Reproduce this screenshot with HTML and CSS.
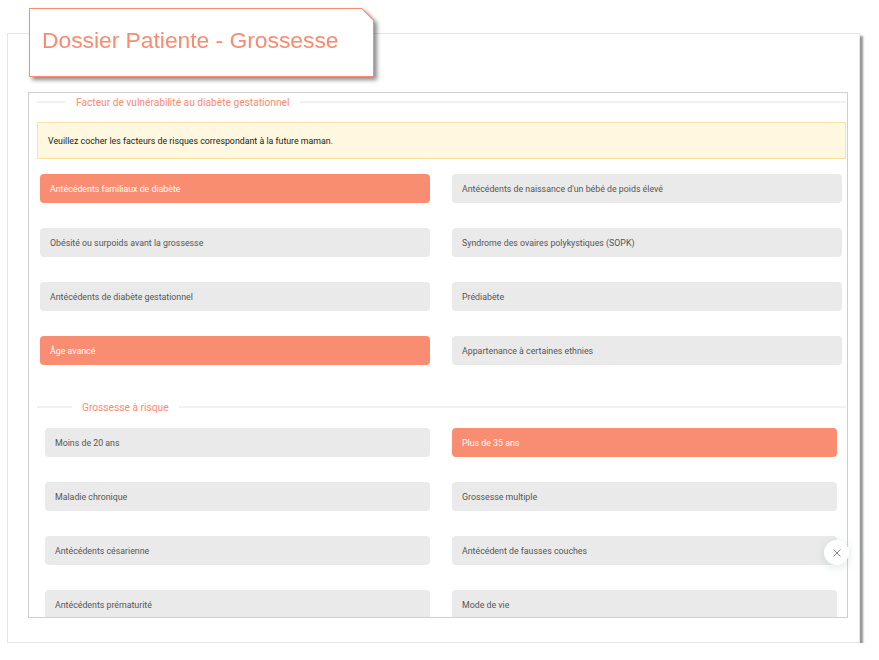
FILE: index.html
```html
<!DOCTYPE html>
<html lang="fr">
<head>
  <meta charset="UTF-8">
  <meta name="viewport" content="width=device-width, initial-scale=1.0">
  <title>Dossier Patiente - Grossesse</title>
  <link rel="stylesheet" href="styles.css">
</head>
<body>
  <div class="card">
    <!-- Title tab -->
    <div class="title-wrap">
      <div class="title-box">
        <h1>Dossier Patiente - Grossesse</h1>
      </div>
    </div>

    <div class="panel">
      <!-- Diabete -->
      <div class="legend"><span>Facteur de vulnérabilité au diabète gestationnel</span></div>
      <div class="alert">Veuillez cocher les facteurs de risques correspondant à la future maman.</div>
      <div class="choices">
        <div class="choice active">Antécédents familiaux de diabète</div>
        <div class="choice">Antécédents de naissance d'un bébé de poids élevé</div>
        <div class="choice">Obésité ou surpoids avant la grossesse</div>
        <div class="choice">Syndrome des ovaires polykystiques (SOPK)</div>
        <div class="choice">Antécédents de diabète gestationnel</div>
        <div class="choice">Prédiabète</div>
        <div class="choice active">Âge avancé</div>
        <div class="choice">Appartenance à certaines ethnies</div>
      </div>

      <!-- Grossesse a risque -->
      <div class="legend legend-2"><span>Grossesse à risque</span></div>
      <div class="choices choices-2">
        <div class="choice">Moins de 20 ans</div>
        <div class="choice active">Plus de 35 ans</div>
        <div class="choice">Maladie chronique</div>
        <div class="choice">Grossesse multiple</div>
        <div class="choice">Antécédents césarienne</div>
        <div class="choice">Antécédent de fausses couches</div>
        <div class="choice">Antécédents prématurité</div>
        <div class="choice">Mode de vie</div>
      </div>
    </div>

    <button class="close-btn" aria-label="Fermer">
      <svg width="10" height="10" viewBox="0 0 10 10"><path d="M1.5 1.5L8.5 8.5M8.5 1.5L1.5 8.5" stroke="#777" stroke-width="0.9" fill="none"/></svg>
    </button>
  </div>
</body>
</html>
```

FILE: styles.css
```css
/* General */
body {
  margin: 0;
  background: #fff;
  font-family: Roboto, "Liberation Sans", Arial, sans-serif;
}

.card {
  position: relative;
  margin: 33px 0 0 7px;
  width: 851px;
  height: 608px;
  border: 1px solid #e6e6e6;
  background: #fff;
  box-shadow: 3px 3px 2px #959595;
}

/* Title tab */
.title-wrap {
  width: 345px;
  margin: -26px 0 0 21px;
  filter: drop-shadow(3px 3px 2px rgba(0, 0, 0, 0.45));
}

.title-box {
  background: #f98d72;
  padding: 1px;
  clip-path: polygon(0 0, calc(100% - 12px) 0, 100% 12px, 100% 100%, 0 100%);
}

.title-box h1 {
  margin: 0;
  height: 67px;
  box-sizing: border-box;
  padding: 18px 0 0 12px;
  background: #fff;
  clip-path: polygon(0 0, calc(100% - 11.5px) 0, 100% 11.5px, 100% 100%, 0 100%);
  font-family: "Liberation Sans", Arial, sans-serif;
  font-weight: normal;
  font-size: 22.8px;
  line-height: 27px;
  color: #f98b70;
}

/* Scroll panel */
.panel {
  margin: 15px 0 0 20px;
  width: 820px;
  height: 526px;
  box-sizing: border-box;
  border: 1px solid #cfcfcf;
  padding: 0 1px 0 8px;
  overflow: hidden;
}

.legend {
  display: flex;
  align-items: center;
  height: 18px;
  font-size: 10.2px;
  color: #f98b70;
}

.legend::before,
.legend::after {
  content: "";
  height: 2px;
  background: #f1f1f1;
}

.legend::before {
  width: 28px;
}

.legend::after {
  flex: 1;
}

.legend span {
  padding: 0 11px;
}

.legend-2 {
  margin-top: 33px;
}

.legend-2::before {
  width: 35px;
}

.legend-2 span {
  padding: 0 10px;
}

.alert {
  margin-top: 11px;
  height: 37px;
  box-sizing: border-box;
  padding: 0 10px;
  display: flex;
  align-items: center;
  background: #fef8e1;
  border: 1px solid #f8e3a0;
  font-size: 8.8px;
  color: #222;
}

.choices {
  display: grid;
  grid-template-columns: 1fr 1fr;
  column-gap: 22px;
  row-gap: 25px;
  margin-top: 15px;
  padding: 0 4px 0 3px;
}

.choices-2 {
  margin-top: 12px;
  padding: 0 9px 0 8px;
}

.choice {
  height: 29px;
  box-sizing: border-box;
  padding: 0 10px;
  display: flex;
  align-items: center;
  background: #eaeaea;
  border-radius: 4px;
  font-size: 8.8px;
  color: #555;
}

.choice.active {
  background: #f98d72;
  color: #fff;
}

/* Floating close */
.close-btn {
  position: absolute;
  left: 816px;
  top: 506px;
  width: 25px;
  height: 25px;
  padding: 0;
  border: none;
  border-radius: 50%;
  background: #fff;
  box-shadow: 0 2px 10px rgba(120, 150, 150, 0.25);
  display: flex;
  align-items: center;
  justify-content: center;
}
```
